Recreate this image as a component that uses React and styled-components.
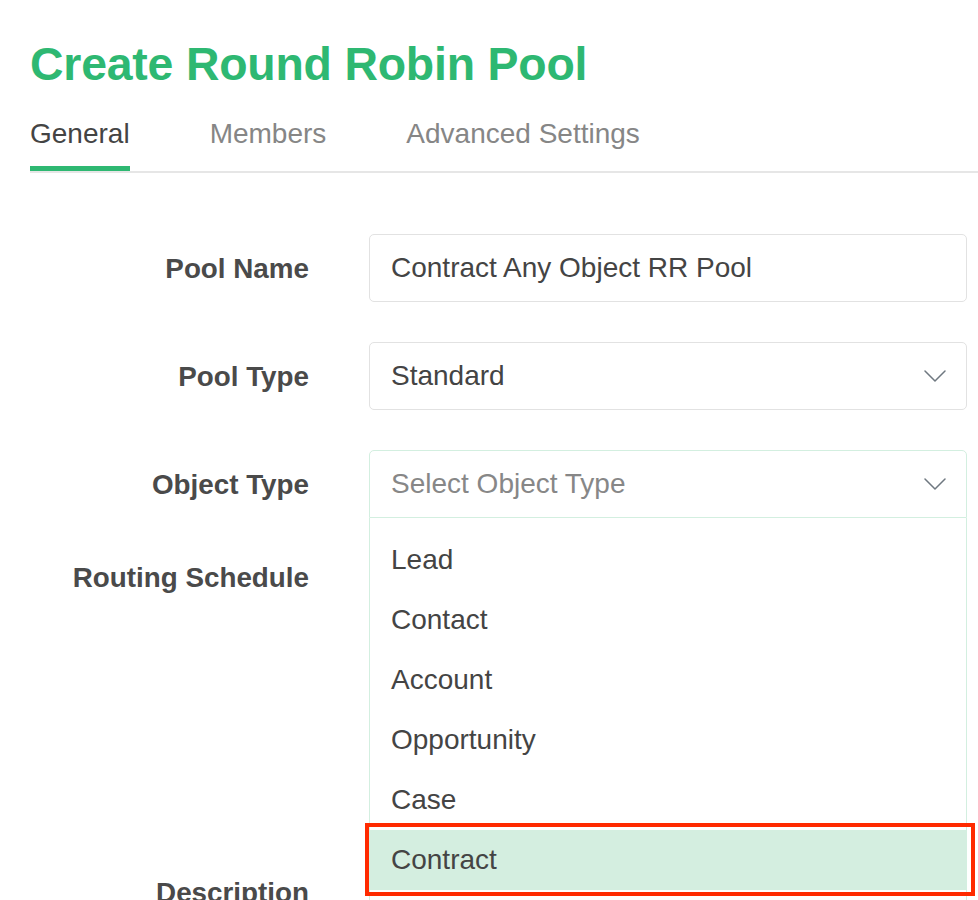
import React from 'react';
import styled, { createGlobalStyle } from 'styled-components';

const GlobalStyle = createGlobalStyle`
  html, body {
    margin: 0;
    padding: 0;
    background: #ffffff;
    font-family: "Liberation Sans", Arial, sans-serif;
    overflow: hidden;
  }
`;

const options = ['Lead', 'Contact', 'Account', 'Opportunity', 'Case', 'Contract'];

const Chevron = () => (
  <svg width="22" height="12" viewBox="0 0 22 12" fill="none">
    <path d="M1 1L11 11L21 1" stroke="#6f7880" strokeWidth="1.5" strokeLinecap="round" strokeLinejoin="round" />
  </svg>
);

const App = () => {
  return (
    <Page>
      <GlobalStyle />
      <Title>Create Round Robin Pool</Title>
      <Tabs>
        <Tab active>General</Tab>
        <Tab>Members</Tab>
        <Tab>Advanced Settings</Tab>
      </Tabs>
      <Form>
        <Row>
          <Label>Pool Name</Label>
          <Field>
            <Value>Contract Any Object RR Pool</Value>
          </Field>
        </Row>
        <Row>
          <Label>Pool Type</Label>
          <Field>
            <Value>Standard</Value>
            <Chevron />
          </Field>
        </Row>
        <Row>
          <Label>Object Type</Label>
          <SelectWrap>
            <Field open>
              <Value placeholder>Select Object Type</Value>
              <Chevron />
            </Field>
            <Menu>
              {options.map((o) => (
                <Option key={o} selected={o === 'Contract'}>
                  {o}
                </Option>
              ))}
            </Menu>
          </SelectWrap>
        </Row>
        <Row>
          <Label top>Routing Schedule</Label>
          <Blank height={275} />
        </Row>
        <Row>
          <Label top>Description</Label>
          <Blank height={120} />
        </Row>
      </Form>
    </Page>
  );
};

export default App;

const Page = styled.div`
  padding: 38px 0 0 30px;
  width: 948px;
`;

const Title = styled.h1`
  margin: 0;
  font-size: 46.4px;
  line-height: 52px;
  font-weight: 700;
  color: #2eb872;
  letter-spacing: -0.2px;
`;

const Tabs = styled.div`
  margin-top: 24px;
  display: flex;
  gap: 80px;
  border-bottom: 2px solid #e6e6e6;
`;

const Tab = styled.div`
  font-size: 28px;
  line-height: 40px;
  padding-bottom: 12px;
  color: ${(p) => (p.active ? '#444444' : '#868686')};
  border-bottom: 5px solid ${(p) => (p.active ? '#2eb872' : 'transparent')};
`;

const Form = styled.div`
  margin-top: 61px;
  display: flex;
  flex-direction: column;
  gap: 40px;
`;

const Row = styled.div`
  display: grid;
  grid-template-columns: 279px 598px;
  column-gap: 60px;
  align-items: start;
`;

const Label = styled.div`
  text-align: right;
  font-size: 27.8px;
  font-weight: 700;
  color: #4a4a4a;
  line-height: 40px;
  padding-top: ${(p) => (p.top ? '0' : '15px')};
`;

const Field = styled.div`
  box-sizing: border-box;
  height: 68px;
  border: 1.5px solid ${(p) => (p.open ? '#d3efe0' : '#e2e2e2')};
  border-radius: ${(p) => (p.open ? '5px 5px 0 0' : '5px')};
  display: flex;
  align-items: center;
  justify-content: space-between;
  padding: 0 20px 0 21px;
  background: #ffffff;
`;

const Value = styled.span`
  font-size: 28px;
  color: ${(p) => (p.placeholder ? '#878787' : '#444444')};
`;

const SelectWrap = styled.div`
  position: relative;
`;

const Menu = styled.div`
  position: absolute;
  top: 68px;
  left: 0;
  right: 0;
  z-index: 2;
  background: #ffffff;
  border: 1.5px solid #d3efe0;
  border-top: none;
  padding-top: 12px;
  height: 420px;
`;

const Option = styled.div`
  position: relative;
  height: 60px;
  display: flex;
  align-items: center;
  padding-left: 21px;
  font-size: 28px;
  color: #444444;
  background: ${(p) => (p.selected ? '#d4eee0' : 'transparent')};

  ${(p) =>
    p.selected &&
    `
    &::after {
      content: '';
      position: absolute;
      left: -5px;
      right: -9px;
      top: -7px;
      bottom: -6px;
      border: 4px solid #ff2a00;
    }
  `}
`;

const Blank = styled.div`
  height: ${(p) => p.height}px;
`;
